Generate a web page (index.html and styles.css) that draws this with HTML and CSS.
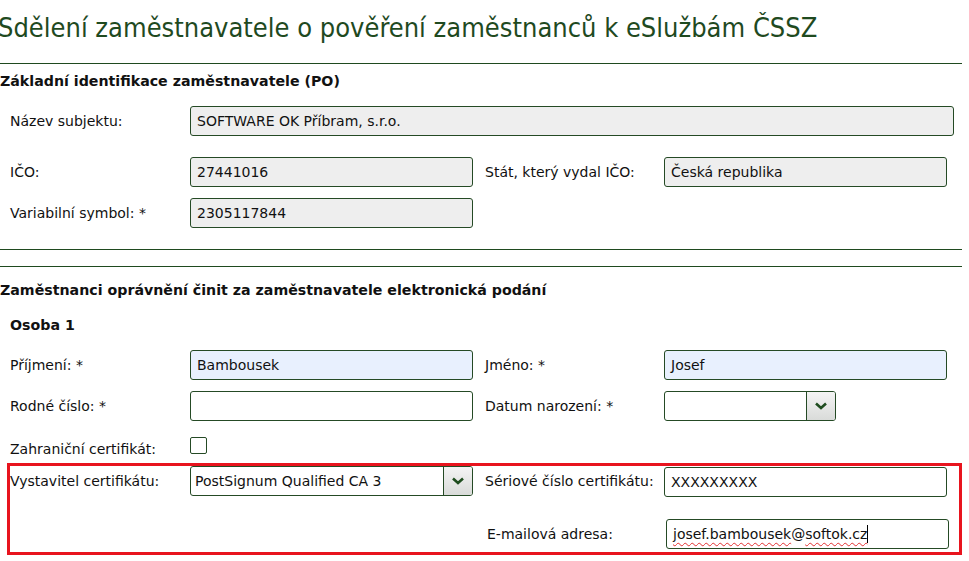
FILE: index.html
```html
<!DOCTYPE html>
<html lang="cs">
<head>
    <meta charset="UTF-8">
    <meta name="viewport" content="width=device-width, initial-scale=1.0">
    <title>Sdělení zaměstnavatele o pověření zaměstnanců k eSlužbám ČSSZ</title>
    <link rel="stylesheet" href="styles.css">
</head>
<body>
    <h1 class="page-title">Sdělení zaměstnavatele o pověření zaměstnanců k eSlužbám ČSSZ</h1>
    <hr class="sep">

    <section class="block">
        <h2 class="block-title">Základní identifikace zaměstnavatele (PO)</h2>
        <div class="row">
            <label class="lbl">Název subjektu:</label>
            <div class="field field-ro field-wide">SOFTWARE OK Příbram, s.r.o.</div>
        </div>
        <div class="row row-gap">
            <label class="lbl">IČO:</label>
            <div class="field field-ro">27441016</div>
            <label class="lbl lbl-right">Stát, který vydal IČO:</label>
            <div class="field field-ro">Česká republika</div>
        </div>
        <div class="row">
            <label class="lbl">Variabilní symbol: *</label>
            <div class="field field-ro">2305117844</div>
        </div>
    </section>

    <hr class="sep sep-a">
    <hr class="sep sep-b">

    <section class="block">
        <h2 class="block-title block-title-2">Zaměstnanci oprávnění činit za zaměstnavatele elektronická podání</h2>
        <h3 class="person-title">Osoba 1</h3>
        <div class="row">
            <label class="lbl">Příjmení: *</label>
            <div class="field field-fill">Bambousek</div>
            <label class="lbl lbl-right">Jméno: *</label>
            <div class="field field-fill">Josef</div>
        </div>
        <div class="row">
            <label class="lbl">Rodné číslo: *</label>
            <div class="field"></div>
            <label class="lbl lbl-right">Datum narození: *</label>
            <div class="field combo combo-date">
                <span class="combo-val"></span>
                <span class="combo-btn"><svg width="12" height="8" viewBox="0 0 12 8"><path d="M1 1.5 L6 6 L11 1.5" fill="none" stroke="#1f4d1f" stroke-width="2.6"/></svg></span>
            </div>
        </div>
        <div class="row row-check">
            <label class="lbl">Zahraniční certifikát:</label>
            <span class="check"></span>
        </div>

        <div class="highlight">
            <div class="row row-cert">
                <label class="lbl lbl-flush">Vystavitel certifikátu:</label>
                <div class="field combo">
                    <span class="combo-val">PostSignum Qualified CA 3</span>
                    <span class="combo-btn"><svg width="12" height="8" viewBox="0 0 12 8"><path d="M1 1.5 L6 6 L11 1.5" fill="none" stroke="#1f4d1f" stroke-width="2.6"/></svg></span>
                </div>
                <label class="lbl lbl-right">Sériové číslo certifikátu:</label>
                <div class="field field-serial">XXXXXXXXX</div>
            </div>
            <div class="row row-mail">
                <label class="lbl lbl-right lbl-mail">E-mailová adresa:</label>
                <div class="field"><span class="typo">josef.bambousek</span>@<span class="typo">softok.cz</span><span class="caret"></span></div>
            </div>
        </div>
    </section>
</body>
</html>
```

FILE: styles.css
```css
body {
    margin: 0;
    font-family: "DejaVu Sans", sans-serif;
    font-size: 14px;
    color: #111;
    background: #fff;
    width: 969px;
    overflow: hidden;
}
.page-title {
    font-family: "DejaVu Sans Condensed", "DejaVu Sans", sans-serif;
    font-weight: normal;
    font-size: 27px;
    line-height: 32px;
    color: #1f4a1f;
    margin: 12px 0 19px -2px;
    white-space: nowrap;
}
.sep {
    border: none;
    border-top: 1px solid #1f4a1f;
    margin: 0;
    width: 962px;
}
.sep-a {
    margin-top: 21px;
}
.sep-b {
    margin-top: 16px;
}
.block-title {
    font-size: 14.2px;
    font-weight: bold;
    line-height: 20px;
    margin: 7px 0 15px 0;
}
.block-title-2 {
    margin-top: 13px;
}
.person-title {
    font-size: 14.2px;
    font-weight: bold;
    line-height: 20px;
    margin: 15px 0 15px 10px;
}
.row {
    display: flex;
    align-items: flex-start;
    margin-bottom: 11px;
}
.row-gap {
    margin-top: 21px;
}
.lbl {
    width: 180px;
    padding-left: 10px;
    line-height: 20px;
    padding-top: 5px;
    white-space: nowrap;
}
.lbl-right {
    width: 179px;
    padding-left: 12px;
}
.lbl-flush {
    padding-left: 0;
}
.field {
    box-sizing: border-box;
    width: 283px;
    height: 30px;
    border: 1px solid #254a25;
    border-radius: 3px;
    background: #fff;
    padding: 0 6px;
    line-height: 29px;
    white-space: nowrap;
    overflow: hidden;
}
.field-ro {
    background: #eeeeee;
}
.field-fill {
    background: #e8f0fe;
}
.field-wide {
    width: 764px;
}
.combo {
    display: flex;
    padding: 0;
}
.combo-val {
    flex: 1;
    padding: 0 4px;
}
.combo-btn {
    width: 28px;
    border-left: 1px solid #254a25;
    background: linear-gradient(#f4f4f4, #d9dbd9);
    display: flex;
    align-items: center;
    justify-content: center;
}
.combo-date {
    width: 172px;
}
.row-check {
    margin-top: 15px;
    margin-bottom: 0;
}
.row-check .lbl {
    padding-top: 3px;
}
.check {
    box-sizing: border-box;
    width: 17px;
    height: 17px;
    border: 1px solid #254a25;
    border-radius: 2px;
    margin-top: 1px;
}
.highlight {
    margin: 4px 0 0 7px;
    width: 955px;
    height: 92px;
    box-sizing: border-box;
    border: 3px solid #e8141e;
}
.row-cert {
    margin: 0;
}
.row-cert .lbl-flush {
    width: 180px;
}
.field-serial {
    margin-top: 1px;
}
.row-mail {
    margin: 22px 0 0 463px;
}
.lbl-mail {
    padding-left: 14px;
}
.typo {
    text-decoration: underline wavy #e23030 1px;
    text-underline-offset: 3px;
}
.caret {
    display: inline-block;
    width: 1px;
    height: 18px;
    background: #000;
    vertical-align: -4px;
}
```
